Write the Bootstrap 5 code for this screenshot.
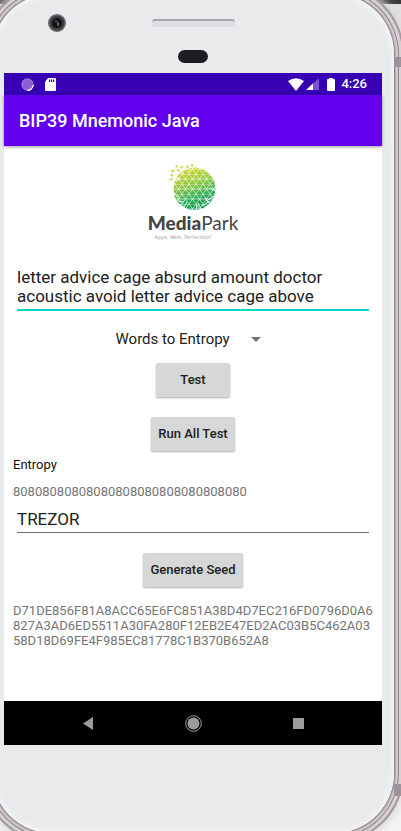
<!DOCTYPE html>
<html lang="en">
<head>
<meta charset="utf-8">
<meta name="viewport" content="width=device-width, initial-scale=1">
<title>BIP39 Mnemonic Java</title>
<link href="https://cdn.jsdelivr.net/npm/bootstrap@5.3.0/dist/css/bootstrap.min.css" rel="stylesheet">
<style>
body{font-family:Roboto,"Liberation Sans",sans-serif;background:linear-gradient(#3a3a3c 4px,#dedede 4px,#ececec 50px,#f4f4f4);overflow:hidden;color:#212121}
.device{margin:-6px 7px 0 -8px;min-height:calc(100vh + 8px);border-radius:60px;background:#e9eaec;
  box-shadow:inset 0 0 5px 2px #f7f7f9,0 0 0 1px #8d878d,0 0 0 2px #b5afb3,0 0 0 4px #cfc9cc,0 0 0 5px #8b858a,0 0 0 8px #d8d1d3,0 0 0 10px #a09a9e,0 0 8px 12px #d5d5d5}
.bezel-top{height:79px;padding-top:20px}
.bezel-row{display:grid;grid-template-columns:1fr 83px 1fr;align-items:center}
.camera{width:18px;height:18px;margin-left:56px}
.speaker{height:8px;border-radius:3px;background:#dcdee2;border-top:2px solid #a3a7ad}
.sensor{width:30px;height:13px;border-radius:7px;background:#1c1d20;margin-top:18px}
.bezel-bottom{height:88px}
.antenna{position:absolute;right:0;width:7px;height:10px;background:#9b959b}
.antenna-top{top:57px}
.antenna-bottom{top:784px;height:12px}
.screen{margin:0 12px;background:#fff}
.statusbar{height:22px;background:#3700b3;color:#fff;font-size:13px;font-weight:500;padding:0 15px 0 17px}
.clock{padding-left:6px}
.signal{margin-left:2px}
.appbar{height:51px;background:#6200ee;padding:0 15px;box-shadow:0 1px 3px #0006}
.appbar h1{font-size:18px;line-height:24px;font-weight:500;color:#fff}
.content{padding:18px 9px 0}
.wordmark{font-family:Lato,"Noto Sans",sans-serif;font-size:19px;line-height:22px;color:#444;font-weight:400}
.wordmark b{font-weight:900}
.tagline{font-family:"DejaVu Sans",sans-serif;font-size:5px;line-height:6px;color:#999;padding-right:20px}
.line-field{border:0;border-radius:0;background:transparent;padding:0;color:#212121;font-size:17px;line-height:19px;resize:none;display:block}
.line-field:focus{box-shadow:none;background:transparent;color:#212121}
.words{height:43px;border-bottom:2px solid #03dac5;margin-top:28px}
.pass{height:28px;border-bottom:1px solid #6f6f6f}
.field-wrap{padding:0 4px}
.mode{--bs-form-select-bg-img:url("data:image/svg+xml,%3csvg xmlns='http://www.w3.org/2000/svg' viewBox='0 0 10 5'%3e%3cpath d='M0 0h10L5 5z' fill='%23757575'/%3e%3c/svg%3e");
  background-image:var(--bs-form-select-bg-img);width:157px;border:0;background-color:transparent;background-size:10px 5px;background-position:right 4px center;padding:0 30px 0 8px;margin-right:14px;font-size:15px;line-height:20px;height:24px;color:#212121}
.act{background:#d6d7d7;border:0;border-radius:2px;height:34px;padding:0 7px;font-size:13px;line-height:18px;font-weight:500;color:#212121;box-shadow:0 1px 2px #0005}
.act-test{width:74px}
.gap-s{margin-top:6px}
.gap-m{margin-top:12px}
.gap-l{margin-top:20px}
.out{font-size:13px;line-height:15px;color:#757575;overflow-wrap:anywhere}
.cap{font-size:13px;line-height:15px;color:#111}
.navkeys{height:44px;background:#000;padding:0 72px}
.key{border:0;background:transparent;padding:0;width:24px;height:24px;display:flex;align-items:center;justify-content:center}
</style>
<script src="https://cdn.jsdelivr.net/npm/bootstrap@5.3.0/dist/js/bootstrap.bundle.min.js"></script>
</head>
<body>
<div class="device d-flex flex-column">
  <div class="bezel-top">
    <div class="bezel-row">
      <svg class="camera" viewBox="0 0 18 18" aria-hidden="true"><circle cx="9" cy="9" r="9" fill="#68696d"/><circle cx="9" cy="9" r="7.5" fill="#3e3f43"/><circle cx="9" cy="9" r="5" fill="#121216"/><circle cx="8" cy="7" r="1.6" fill="#343c50"/><path d="M9 8h2v4H9z" fill="#6b6230"/></svg>
      <div class="speaker"></div>
    </div>
    <div class="sensor mx-auto"></div>
  </div>

  <div class="screen d-flex flex-column flex-grow-1">
    <div class="statusbar d-flex align-items-center">
      <svg width="13" height="13" viewBox="0 0 13 13" aria-hidden="true"><circle cx="6.5" cy="6.5" r="6" fill="#8a62d4"/><circle cx="6.5" cy="6.5" r="5.6" fill="none" stroke="#b79ce6" stroke-dasharray="1 1"/><path d="M12.300 7A6 6 0 0 1 6 12.400" fill="none" stroke="#fff" stroke-width="1.200"/></svg>
      <svg class="ms-2 me-auto" width="15" height="13" viewBox="0 0 15 13" aria-hidden="true"><path d="M6 0h7q1 0 1 1v11q0 1-1 1H4q-1 0-1-1V4z" fill="#fff"/><path d="M7 1.500h1.200v2.500H7zM9 1.500h1.200v2.500H9zM11 1.500h1.200v2.500H11z" fill="#3700b3"/></svg>
      <svg width="16" height="13" viewBox="0 0 16 13" aria-hidden="true"><path d="M0 3Q8-2.500 16 3L8 13z" fill="#fff"/></svg>
      <svg class="signal" width="13" height="12" viewBox="0 0 13 12" aria-hidden="true"><path d="M13 0v12H0z" fill="#7a52cc"/><path d="M7 5.500V12H0z" fill="#fff"/></svg>
      <svg class="ms-2" width="8" height="13" viewBox="0 0 8 13" aria-hidden="true"><path d="M2 0h4v1h1q1 0 1 1v10q0 1-1 1H1q-1 0-1-1V2q0-1 1-1h1z" fill="#fff"/></svg>
      <span class="clock">4:26</span>
    </div>
    <header class="appbar d-flex align-items-center"><h1 class="m-0">BIP39 Mnemonic Java</h1></header>

    <main class="content flex-grow-1">
      <div class="text-center">
        <svg class="d-block mx-auto" width="50" height="48" viewBox="0 0 50 48" role="img" aria-label="MediaPark globe">
          <defs>
            <linearGradient id="leaf" x1=".3" y1="0" x2=".6" y2="1"><stop offset="0" stop-color="#d3d829"/><stop offset=".4" stop-color="#8dc63f"/><stop offset=".7" stop-color="#2fb058"/><stop offset="1" stop-color="#079447"/></linearGradient>
            <pattern id="mesh" width="7" height="10" patternUnits="userSpaceOnUse"><path d="M0 0h7M0 5h7M0 0l3.500 5L0 10M7 0L3.500 5 7 10" fill="none" stroke="#fff" stroke-width=".6"/></pattern>
          </defs>
          <path id="globe" d="M11 10l5-4 6-2 6-.5 7 2 6 4 4 5 2 6 .5 6-2 7-4 6-6 4.500-7 2-7-.5-6-2.500-6-5-3-6-1-7 1-7 3-6z" fill="url(#leaf)"/>
          <path d="M11 10l5-4 6-2 6-.5 7 2 6 4 4 5 2 6 .5 6-2 7-4 6-6 4.500-7 2-7-.5-6-2.500-6-5-3-6-1-7 1-7 3-6z" fill="url(#mesh)"/>
          <path d="M4 18l7-3M7 12l6 4M13 7l4 4M20 4l2 4M34 42l8-5M38 37l8-5M33 45l-3-6M42 40l-5-6M48 27l-7-3M28 47l1-6M7 30l5 4M10 37l6 1M16 43l3-5" stroke="#fff" stroke-width="1"/>
          <path d="M12 3l4-1-2 3zM17 3l4-2-1 3zM22 1l3-1 0 3zM8 6l4-1-1 3zM3 6l4 0-3 3zM2 11l4-1-2 3zM1 15l4-1-2 3zM7 2l3-1-1 3z" fill="#c8d43a"/>
        </svg>
        <div class="wordmark"><b>Media</b>Park</div>
        <div class="tagline">Apps, Web, Perfection!</div>
      </div>

      <div class="field-wrap">
        <textarea class="form-control line-field words overflow-hidden" aria-label="Mnemonic words" spellcheck="false" rows="2">letter advice cage absurd amount doctor acoustic avoid letter advice cage above</textarea>
      </div>
      <div class="d-flex flex-column align-items-center">
        <select class="form-select mode mt-3" aria-label="Conversion"><option>Words to Entropy</option></select>
        <button type="button" class="btn act act-test gap-m">Test</button>
        <button type="button" class="btn act gap-l">Run All Test</button>
      </div>
      <label class="cap d-block gap-s" for="entropy">Entropy</label>
      <output class="out d-block gap-m" id="entropy">80808080808080808080808080808080</output>
      <div class="field-wrap gap-s">
        <input class="form-control line-field pass" type="text" value="TREZOR" aria-label="Passphrase">
      </div>
      <div class="text-center"><button type="button" class="btn act gap-l">Generate Seed</button></div>
      <output class="out d-block mt-3">D71DE856F81A8ACC65E6FC851A38D4D7EC216FD0796D0A6827A3AD6ED5511A30FA280F12EB2E47ED2AC03B5C462A0358D18D69FE4F985EC81778C1B370B652A8</output>
    </main>

    <nav class="navkeys d-flex align-items-center justify-content-between" aria-label="System">
      <button type="button" class="key" aria-label="Back"><svg width="10" height="13" viewBox="0 0 10 13"><path d="M10 0v13L0 6.500z" fill="#9c9c9c"/></svg></button>
      <button type="button" class="key" aria-label="Home"><svg width="17" height="17" viewBox="0 0 17 17"><circle cx="8.500" cy="8.500" r="7.800" fill="none" stroke="#a5a5a5"/><circle cx="8.500" cy="8.500" r="6" fill="#9c9c9c"/></svg></button>
      <button type="button" class="key" aria-label="Recent apps"><svg width="11" height="11" viewBox="0 0 11 11"><path d="M0 0h11v11H0z" fill="#9c9c9c"/></svg></button>
    </nav>
  </div>
  <div class="bezel-bottom"></div>
</div>
<span class="antenna antenna-top"></span>
<span class="antenna antenna-bottom"></span>
</body>
</html>
